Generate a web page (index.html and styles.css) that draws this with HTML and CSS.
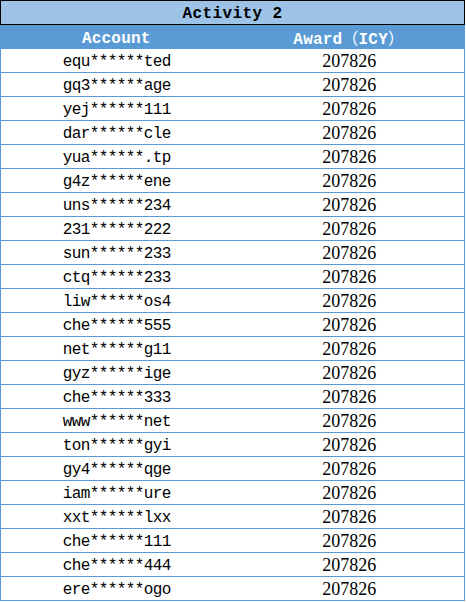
FILE: index.html
```html
<!DOCTYPE html>
<html>
<head>
<meta charset="utf-8">
<link rel="stylesheet" href="styles.css">
</head>
<body>
<div class="sheet">
  <div class="title">Activity 2</div>
  <div class="head"><div>Account</div><div>Award<span class="cjk">（</span>ICY<span class="cjk">）</span></div></div>
  <div class="row"><div class="acc">equ******ted</div><div class="num">207826</div></div>
  <div class="row"><div class="acc">gq3******age</div><div class="num">207826</div></div>
  <div class="row"><div class="acc">yej******111</div><div class="num">207826</div></div>
  <div class="row"><div class="acc">dar******cle</div><div class="num">207826</div></div>
  <div class="row"><div class="acc">yua******.tp</div><div class="num">207826</div></div>
  <div class="row"><div class="acc">g4z******ene</div><div class="num">207826</div></div>
  <div class="row"><div class="acc">uns******234</div><div class="num">207826</div></div>
  <div class="row"><div class="acc">231******222</div><div class="num">207826</div></div>
  <div class="row"><div class="acc">sun******233</div><div class="num">207826</div></div>
  <div class="row"><div class="acc">ctq******233</div><div class="num">207826</div></div>
  <div class="row"><div class="acc">liw******os4</div><div class="num">207826</div></div>
  <div class="row"><div class="acc">che******555</div><div class="num">207826</div></div>
  <div class="row"><div class="acc">net******g11</div><div class="num">207826</div></div>
  <div class="row"><div class="acc">gyz******ige</div><div class="num">207826</div></div>
  <div class="row"><div class="acc">che******333</div><div class="num">207826</div></div>
  <div class="row"><div class="acc">www******net</div><div class="num">207826</div></div>
  <div class="row"><div class="acc">ton******gyi</div><div class="num">207826</div></div>
  <div class="row"><div class="acc">gy4******qge</div><div class="num">207826</div></div>
  <div class="row"><div class="acc">iam******ure</div><div class="num">207826</div></div>
  <div class="row"><div class="acc">xxt******lxx</div><div class="num">207826</div></div>
  <div class="row"><div class="acc">che******111</div><div class="num">207826</div></div>
  <div class="row"><div class="acc">che******444</div><div class="num">207826</div></div>
  <div class="row"><div class="acc">ere******ogo</div><div class="num">207826</div></div>
</div>
</body>
</html>
```
FILE: styles.css
```css
html, body {
  margin: 0;
  padding: 0;
  background: #fff;
}
.sheet {
  width: 465px;
}
.title {
  box-sizing: border-box;
  height: 25px;
  padding-top: 3px;
  border: 1px solid #000;
  background: #9dc3e6;
  font-family: "Liberation Mono", monospace;
  font-weight: bold;
  font-size: 16px;
  letter-spacing: 0.4px;
  color: #000;
  display: flex;
  align-items: center;
  justify-content: center;
}
.head {
  box-sizing: border-box;
  height: 24px;
  padding-top: 3px;
  background: #5b9bd5;
  color: #fff;
  font-family: "Liberation Mono", monospace;
  font-weight: bold;
  font-size: 16px;
  line-height: 18px;
  letter-spacing: 0.2px;
  display: grid;
  grid-template-columns: 1fr 1fr;
  align-items: center;
  text-align: center;
}
.cjk {
  font-family: "Noto Sans CJK SC", sans-serif;
  font-weight: normal;
  font-size: 16px;
  line-height: 1;
}
.row {
  box-sizing: border-box;
  height: 24px;
  padding-top: 2px;
  border-left: 1px solid #5b9bd5;
  border-right: 1px solid #5b9bd5;
  border-bottom: 1px solid #5b9bd5;
  display: grid;
  grid-template-columns: 1fr 1fr;
  align-items: center;
  text-align: center;
  color: #000;
}
.acc {
  font-family: "Liberation Mono", monospace;
  font-size: 16px;
  letter-spacing: -0.6px;
}
.num {
  font-family: "Liberation Serif", serif;
  font-size: 18px;
  padding-left: 2px;
}
```
